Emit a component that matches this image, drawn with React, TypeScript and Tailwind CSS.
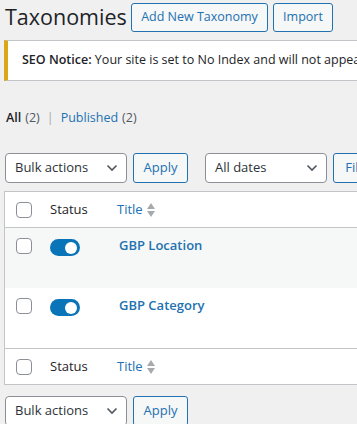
import React from "react";

const Checkbox = () => (
  <span className="block w-4 h-4 rounded-[4px] border border-[#8c8f94] bg-white shrink-0" />
);

const Toggle = () => (
  <span className="relative block w-[30px] h-[17px] rounded-full bg-[#0a74b8] shrink-0">
    <span className="absolute right-[3px] top-[2.5px] w-[12px] h-[12px] rounded-full bg-white" />
  </span>
);

const SortIcon = () => (
  <svg width="10" height="16" viewBox="0 0 10 16" className="ml-[3px]">
    <path d="M5 1 L9 7 L1 7 Z" fill="#a7aaad" />
    <path d="M1 9 L9 9 L5 15 Z" fill="#a7aaad" />
  </svg>
);

const Chevron = () => (
  <svg width="12" height="8" viewBox="0 0 12 8">
    <path d="M1.5 1.5 L6 6 L10.5 1.5" fill="none" stroke="#50575e" strokeWidth="1.6" />
  </svg>
);

const Select = ({ label, w }: { label: string; w: string }) => (
  <div className={`flex items-center justify-between h-[30px] rounded-[4px] border border-[#8c8f94] bg-white pl-[9px] pr-[8px] text-[13px] text-[#2c3338] shrink-0 ${w}`}>
    <span>{label}</span>
    <Chevron />
  </div>
);

const Btn = ({ label, w }: { label: string; w: string }) => (
  <div className={`flex items-center justify-center h-[30px] rounded-[3px] border border-[#2271b1] bg-[#f6f7f7] text-[13px] text-[#2271b1] shrink-0 ${w}`}>
    {label}
  </div>
);

const HeadRow = ({ bottom }: { bottom?: boolean }) => (
  <div className={`flex items-center h-[36px] bg-white ${bottom ? "border-t" : "border-b"} border-[#c3c4c7]`}>
    <div className="w-[45px] pl-[11px]"><Checkbox /></div>
    <div className="w-[67px] text-[13px] text-[#1d2327]">Status</div>
    <div className="flex items-center text-[13px] text-[#2271b1]">Title<SortIcon /></div>
  </div>
);

const Row = ({ title, striped }: { title: string; striped?: boolean }) => (
  <div className={`flex items-start h-[60px] pt-[9px] ${striped ? "bg-[#f6f7f7]" : "bg-white"}`}>
    <div className="w-[45px] pl-[11px] pt-[1px]"><Checkbox /></div>
    <div className="w-[69px] pt-[2px]"><Toggle /></div>
    <div className="text-[13px] font-semibold text-[#2271b1] leading-[17px]">{title}</div>
  </div>
);

export default function App() {
  return (
    <div className="w-[357px] h-[424px] overflow-hidden bg-[#f0f0f1] font-['Open_Sans',sans-serif] text-[12px] text-[#3c434a]">
      <div className="w-[700px] pl-[4px]">
        <div className="flex items-center h-[34px]">
          <h1 className="text-[21.5px] leading-[30px] text-[#1d2327] ml-[1px] mr-[11px] -mt-[1px] w-[115px] whitespace-nowrap">Taxonomies</h1>
          <Btn label="Add New Taxonomy" w="w-[137px] !h-[29px] !text-[12.5px]" />
          <div className="w-[5px]" />
          <Btn label="Import" w="w-[60px] !h-[29px] !text-[12.5px]" />
        </div>
        <div className="mt-[6px] h-[41px] flex items-center bg-white border-y border-[#c3c4c7] border-l-4 border-l-[#dba617] pl-[14px] whitespace-nowrap text-[12.5px] text-[#1d2327]">
          <span className="font-semibold">SEO Notice:</span>&nbsp;Your site is set to No Index and will not appear in search engines.
        </div>
        <div className="mt-[27px] ml-[2px] flex items-center h-[20px] text-[12.5px] whitespace-nowrap">
          <span className="font-semibold text-[#1d2327]">All</span>
          <span className="text-[#50575e] ml-[4px]">(2)</span>
          <span className="text-[#a7aaad] mx-[7px]">|</span>
          <span className="text-[#2271b1]">Published</span>
          <span className="text-[#50575e] ml-[4px]">(2)</span>
        </div>
        <div className="mt-[25px] flex items-center gap-[6px] ml-[1px]">
          <Select label="Bulk actions" w="w-[122px]" />
          <Btn label="Apply" w="w-[55px]" />
          <div className="w-[5px]" />
          <Select label="All dates" w="w-[122px]" />
          <Btn label="Filter" w="w-[55px]" />
        </div>
        <div className="mt-[8px] border border-[#c3c4c7] bg-white">
          <HeadRow />
          <Row title="GBP Location" striped />
          <Row title="GBP Category" />
          <HeadRow bottom />
        </div>
        <div className="mt-[11px] flex items-center gap-[6px] ml-[1px]">
          <Select label="Bulk actions" w="w-[122px]" />
          <Btn label="Apply" w="w-[55px]" />
        </div>
      </div>
    </div>
  );
}
